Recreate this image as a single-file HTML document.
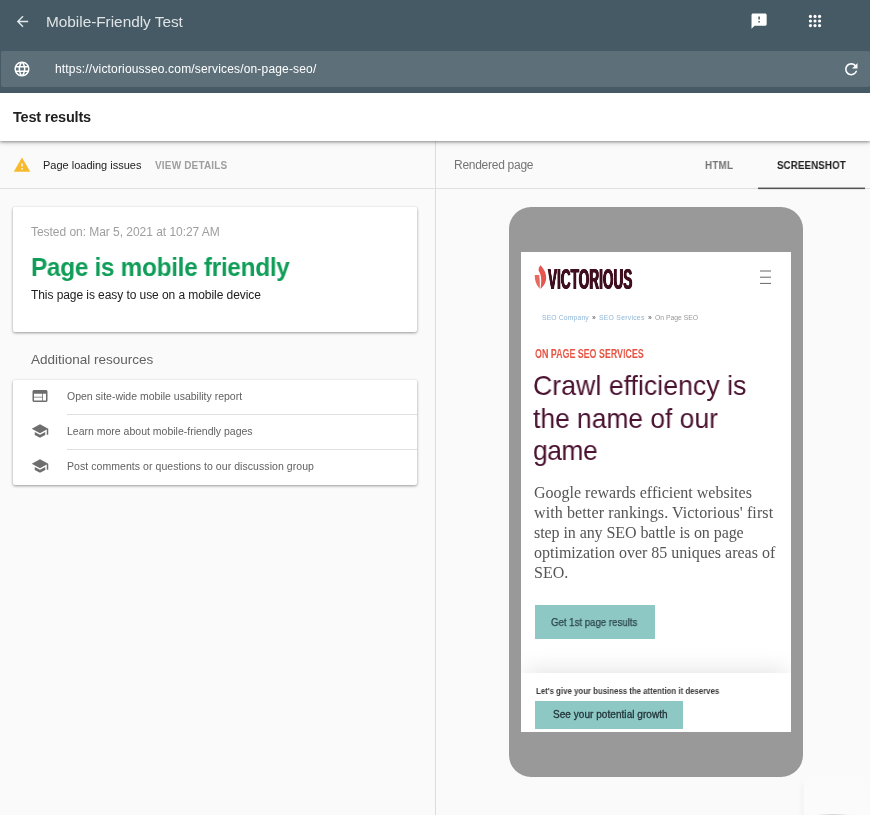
<!DOCTYPE html>
<html lang="en">
<head>
<meta charset="utf-8">
<title>Mobile-Friendly Test</title>
<style>
html,body{margin:0;padding:0;}
body{width:870px;height:815px;overflow:hidden;background:#fafafa;position:relative;
  font-family:"Liberation Sans",sans-serif;}
.abs{position:absolute;}
.t{position:absolute;white-space:nowrap;line-height:1;transform-origin:0 0;will-change:transform;}
svg{display:block;}
/* header */
#hdr{left:0;top:0;width:870px;height:93px;background:#455a64;}
#urlbar{left:1px;top:51px;width:869px;height:36px;background:#5d707a;border-radius:2px;}
#title{left:46px;top:14px;font-size:15.4px;color:#dfe3e5;letter-spacing:-.03px;}
#url{left:55px;top:62.9px;font-size:12px;color:#ffffff;letter-spacing:.17px;}
/* test results bar */
#trbar{left:0;top:93px;width:870px;height:48px;background:#fff;box-shadow:0 1px 3px rgba(0,0,0,.4),0 2px 6px rgba(0,0,0,.1);}
#tr{left:12.8px;top:110.2px;font-size:14.5px;font-weight:bold;color:#212121;letter-spacing:-.2px;}
/* row */
#vdiv{left:435px;top:141px;width:1px;height:674px;background:#dcdcdc;}
#hline{left:0;top:188px;width:870px;height:1px;background:#e0e0e0;}
#pli{left:43px;top:159.9px;font-size:11px;color:#212121;}
#vd{left:155px;top:160.5px;font-size:10px;font-weight:bold;color:#9e9e9e;letter-spacing:.17px;}
#rp{left:454px;top:158.5px;font-size:12px;color:#757575;letter-spacing:-.27px;}
#tabhtml{left:704.5px;top:160.2px;font-size:10.5px;font-weight:bold;color:#757575;letter-spacing:.3px;transform:scaleX(.93);}
#tabss{left:776.5px;top:160.2px;font-size:10.5px;font-weight:bold;color:#212121;letter-spacing:.1px;transform:scaleX(.93);}
#tabline{left:758px;top:187px;width:107px;height:3px;background:linear-gradient(to bottom,rgba(85,85,85,.45) 0,rgba(85,85,85,.45) 33.3%,#555 33.4%,#555 66.6%,rgba(85,85,85,.12) 66.7%);}
/* card 1 */
#card1{left:13px;top:207px;width:404px;height:125px;background:#fff;border-radius:2px;box-shadow:0 1px 3px rgba(0,0,0,.4);}
#tested{left:31px;top:225.9px;font-size:12px;color:#9e9e9e;letter-spacing:-.04px;}
#big{left:31px;top:254.6px;font-size:25px;font-weight:bold;color:#0f9d58;letter-spacing:-.3px;transform:scaleX(.974);}
#sub{left:31px;top:288.9px;font-size:12px;color:#212121;letter-spacing:-.07px;}
#addl{left:31px;top:352.5px;font-size:13.5px;color:#616161;}
/* card 2 */
#card2{left:13px;top:380px;width:404px;height:105px;background:#fff;border-radius:2px;box-shadow:0 1px 3px rgba(0,0,0,.4);}
.sep{position:absolute;left:67px;width:350px;height:1px;background:#e0e0e0;}
.li{font-size:10.5px;color:#616161;left:67px;}
/* phone */
#phone{left:509px;top:207px;width:294px;height:570px;background:#999;border-radius:22px;}
#screen{left:521px;top:252px;width:270px;height:480px;background:#fff;overflow:hidden;}

.ic{position:absolute;}
/* phone content */
#logo{left:548.4px;top:264px;font-size:29.5px;font-weight:bold;color:#3f0f1f;transform:scaleX(.456);letter-spacing:.2px;text-shadow:1.1px 0 0 #3f0f1f,-1.1px 0 0 #3f0f1f;}
.bc{font-size:6.8px;top:315px;}
#eyebrow{left:535px;top:347.8px;font-size:12.5px;font-weight:bold;color:#e8503f;transform:scaleX(.71);}
.h1{font-size:27.5px;color:#4a1230;left:532.5px;transform:scaleX(.972);}
.p{font-family:"Liberation Serif",serif;font-size:16px;color:#555;left:534px;}
#btn1{left:535px;top:605px;width:120px;height:34px;background:#8dc8c4;}
#btn1t{left:551.4px;top:616.9px;font-size:10.5px;color:#2c464c;transform:scaleX(.918);-webkit-text-stroke:.25px #2c464c;}
#grad{left:521px;top:640px;width:270px;height:33px;overflow:hidden;}
#foot{left:521px;top:673px;width:270px;height:59px;background:#fff;}
#lets{left:536px;top:687px;font-size:8.5px;font-weight:bold;color:#3a3a3a;transform:scaleX(.921);}
#btn2{left:535px;top:701px;width:148px;height:28px;background:#8dc8c4;}
#btn2t{left:552.7px;top:709.9px;font-size:10px;color:#22343a;letter-spacing:.05px;-webkit-text-stroke:.3px #22343a;}
</style>
</head>
<body>
<div id="vdiv" class="abs"></div>
<div id="hline" class="abs"></div>
<div id="trbar" class="abs"></div>
<div id="hdr" class="abs"></div>
<div id="urlbar" class="abs"></div>
<div id="title" class="t">Mobile-Friendly Test</div>
<div id="url" class="t">https://victoriousseo.com/services/on-page-seo/</div>

<div id="tr" class="t">Test results</div>

<div id="pli" class="t">Page loading issues</div>
<div id="vd" class="t">VIEW DETAILS</div>
<div id="rp" class="t">Rendered page</div>
<div id="tabhtml" class="t">HTML</div>
<div id="tabss" class="t">SCREENSHOT</div>
<div id="tabline" class="abs"></div>

<div id="card1" class="abs"></div>
<div id="tested" class="t">Tested on: Mar 5, 2021 at 10:27 AM</div>
<div id="big" class="t">Page is mobile friendly</div>
<div id="sub" class="t">This page is easy to use on a mobile device</div>
<div id="addl" class="t">Additional resources</div>

<div id="card2" class="abs"></div>
<div class="sep" style="top:414px"></div>
<div class="sep" style="top:449px"></div>
<div id="li1" class="t li" style="top:390.9px">Open site-wide mobile usability report</div>
<div id="li2" class="t li" style="top:425.8px">Learn more about mobile-friendly pages</div>
<div id="li3" class="t li" style="top:460.7px;letter-spacing:.06px">Post comments or questions to our discussion group</div>

<div id="phone" class="abs"></div>
<div id="screen" class="abs"></div>

<!-- header icons -->
<svg class="ic" id="i_back" style="left:14px;top:13px" width="17" height="17" viewBox="0 0 24 24"><path fill="#e4e8ea" d="M20 11H7.83l5.59-5.59L12 4l-8 8 8 8 1.41-1.41L7.83 13H20v-2z"/></svg>
<svg class="ic" id="i_globe" style="left:13px;top:59.8px" width="18" height="18" viewBox="0 0 24 24"><path fill="#fff" d="M11.99 2C6.47 2 2 6.48 2 12s4.47 10 9.99 10C17.52 22 22 17.52 22 12S17.52 2 11.99 2zm6.93 6h-2.95c-.32-1.25-.78-2.45-1.38-3.56 1.84.63 3.37 1.91 4.33 3.56zM12 4.04c.83 1.2 1.48 2.53 1.91 3.96h-3.820c.43-1.43 1.08-2.76 1.91-3.96zM4.26 14C4.1 13.36 4 12.69 4 12s.1-1.36.26-2h3.38c-.08.66-.14 1.32-.14 2 0 .68.06 1.34.14 2H4.26zm.82 2h2.95c.32 1.25.78 2.45 1.38 3.56-1.84-.63-3.37-1.9-4.33-3.56zm2.95-8H5.080c.96-1.66 2.49-2.93 4.33-3.56C8.81 5.55 8.35 6.75 8.03 8zM12 19.96c-.83-1.2-1.48-2.53-1.91-3.96h3.820c-.43 1.43-1.08 2.76-1.91 3.96zM14.34 14H9.660c-.09-.66-.16-1.32-.16-2 0-.68.07-1.35.16-2h4.680c.09.65.16 1.32.16 2 0 .68-.07 1.34-.16 2zm.25 5.560c.6-1.11 1.06-2.31 1.38-3.56h2.950c-.96 1.65-2.49 2.93-4.33 3.560zM16.360 14c.08-.66.14-1.32.14-2 0-.68-.06-1.34-.14-2h3.380c.16.64.26 1.31.26 2s-.1 1.36-.26 2h-3.380z"/></svg>
<svg class="ic" id="i_fb" style="left:750.2px;top:12.3px" width="18.2" height="18.2" viewBox="0 0 24 24"><path fill="#fff" d="M20 2H4c-1.1 0-1.99.9-1.990 2L2 22l4-4h14c1.100 0 2-.9 2-2V4c0-1.100-.9-2-2-2zm-7 12h-2v-2h2v2zm0-4h-2V6h2v4z"/></svg>
<svg class="ic" id="i_apps" style="left:806px;top:12px" width="18" height="18" viewBox="0 0 24 24" fill="#fff"><circle cx="5.900" cy="5.900" r="2.100"/><circle cx="12" cy="5.900" r="2.100"/><circle cx="18.100" cy="5.900" r="2.100"/><circle cx="5.900" cy="12" r="2.100"/><circle cx="12" cy="12" r="2.100"/><circle cx="18.100" cy="12" r="2.100"/><circle cx="5.900" cy="18.100" r="2.100"/><circle cx="12" cy="18.100" r="2.100"/><circle cx="18.100" cy="18.100" r="2.100"/></svg>
<svg class="ic" id="i_refresh" style="left:842.400px;top:59.800px" width="18.600" height="18.600" viewBox="0 0 24 24"><path fill="#fff" d="M17.650 6.350C16.200 4.900 14.210 4 12 4c-4.420 0-7.990 3.580-7.990 8s3.570 8 7.990 8c3.730 0 6.840-2.550 7.730-6h-2.080c-.82 2.330-3.040 4-5.650 4-3.310 0-6-2.690-6-6s2.690-6 6-6c1.660 0 3.140.69 4.220 1.780L13 11h7V4l-2.350 2.350z"/></svg>
<svg class="ic" id="i_warn" style="left:13px;top:156.300px" width="18" height="18" viewBox="0 0 24 24"><path fill="#f8ba2c" d="M1 21h22L12 2 1 21zm12-3h-2v-2h2v2zm0-4h-2v-4h2v4z"/></svg>
<svg class="ic" id="i_web" style="left:30.800px;top:387.100px" width="18" height="18" viewBox="0 0 24 24"><path fill="#6e6e6e" d="M20 4H4c-1.100 0-1.990.9-1.990 2L2 18c0 1.100.9 2 2 2h16c1.100 0 2-.9 2-2V6c0-1.100-.9-2-2-2zm-5 14H4v-4h11v4zm0-5H4V9h11v4zm5 5h-4V9h4v9z"/></svg>
<svg class="ic" id="i_sch1" style="left:31.250px;top:421.700px" width="18" height="18" viewBox="0 0 24 24"><path fill="#6e6e6e" d="M5 13.180v4L12 21l7-3.820v-4L12 17l-7-3.820zM12 3L1 9l11 6 9-4.910V17h2V9L12 3z"/></svg>
<svg class="ic" id="i_sch2" style="left:31.250px;top:456.800px" width="18" height="18" viewBox="0 0 24 24"><path fill="#6e6e6e" d="M5 13.180v4L12 21l7-3.820v-4L12 17l-7-3.820zM12 3L1 9l11 6 9-4.910V17h2V9L12 3z"/></svg>

<!-- phone screen content -->
<svg class="ic" id="flame" style="left:533px;top:264px" width="15" height="27" viewBox="0 0 15 27">
<path fill="#e5564f" d="M7.400 1.200 C10.500 4.500 13.200 8.500 13.200 13.500 C13.200 18.500 10.500 22.500 7.400 25 C8.200 21 8.400 17 8 13 C7.700 10.500 6.600 8.500 5.600 6.500 C5.400 4.500 6.200 2.800 7.400 1.200 Z"/>
<path fill="#e8695f" d="M1.800 11 L6.100 11 C6.900 15 7 20 6.700 24.600 C3.600 21.500 1.600 16.500 1.800 11 Z"/>
</svg>
<div id="logo" class="t">VICTORIOUS</div>
<svg class="ic" id="burger" style="left:759px;top:269px" width="13" height="16" viewBox="0 0 13 16"><path stroke="#666" stroke-width="1" d="M1 2h11M1 8.200h11M1 14.400h11"/></svg>
<div id="bc1" class="t bc" style="left:542px;color:#8fb6d6;letter-spacing:.14px">SEO Company</div>
<div id="bc2" class="t bc" style="left:591.5px;color:#777;font-weight:bold">»</div>
<div id="bc3" class="t bc" style="left:599px;color:#8fb6d6;letter-spacing:.27px">SEO Services</div>
<div id="bc4" class="t bc" style="left:647.5px;color:#777;font-weight:bold">»</div>
<div id="bc5" class="t bc" style="left:654.500px;color:#999">On Page SEO</div>
<div id="eyebrow" class="t">ON PAGE SEO SERVICES</div>
<div id="h1a" class="t h1" style="top:372px">Crawl efficiency is</div>
<div id="h1b" class="t h1" style="top:404.9px;transform:scaleX(.96)">the name of our</div>
<div id="h1c" class="t h1" style="top:437.4px;letter-spacing:-.5px;transform:scaleX(.962)">game</div>
<div id="p1" class="t p" style="top:484.6px">Google rewards efficient websites</div>
<div id="p2" class="t p" style="top:504.9px;letter-spacing:.11px">with better rankings. Victorious' first</div>
<div id="p3" class="t p" style="top:524.9px;letter-spacing:-.07px">step in any SEO battle is on page</div>
<div id="p4" class="t p" style="top:544.6px">optimization over 85 uniques areas of</div>
<div id="p5" class="t p" style="top:564.6px">SEO.</div>
<div id="btn1" class="abs"></div>
<div id="btn1t" class="t">Get 1st page results</div>
<div id="grad" class="abs"><div style="position:absolute;left:10px;top:35px;width:250px;height:20px;box-shadow:0 0 22px 6px rgba(0,0,0,.1)"></div></div>
<div id="foot" class="abs"></div>
<div id="lets" class="t">Let's give your business the attention it deserves</div>
<div id="btn2" class="abs"></div>
<div id="btn2t" class="t">See your potential growth</div>
<div id="fabbox" class="abs" style="left:804px;top:779px;width:66px;height:36px;background:linear-gradient(to bottom,#fafafa,#fbfbfb 8px);box-shadow:-3px 4px 5px rgba(0,0,0,.028)"></div>
<div id="fabsh" class="abs" style="left:810px;top:813.5px;width:46px;height:4px;border-radius:50%;background:radial-gradient(ellipse at center,rgba(0,0,0,.38) 0%,rgba(0,0,0,.2) 45%,rgba(0,0,0,0) 75%)"></div>
</body>
</html>
